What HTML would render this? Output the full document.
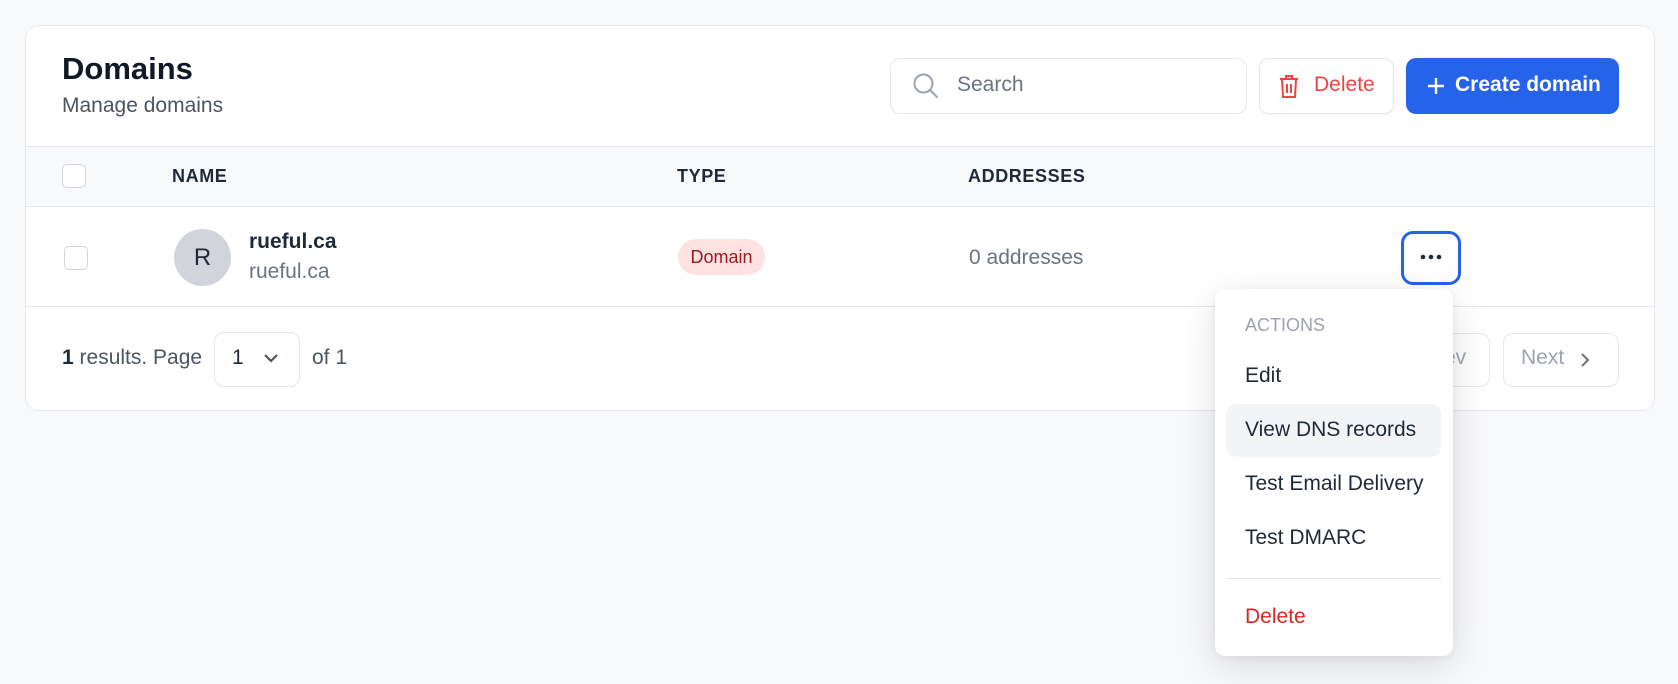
<!DOCTYPE html>
<html><head><meta charset="utf-8"><style>
*{box-sizing:border-box;margin:0;padding:0}
body{width:1678px;height:684px;background:#f8f9fb;font-family:"Liberation Sans",sans-serif;position:relative;overflow:hidden;color:#1f2937}
.abs{position:absolute}
.card{left:25px;top:25px;width:1630px;height:386px;background:#fff;border:1px solid #e5e7eb;border-radius:14px;overflow:hidden}
.t{white-space:nowrap}
.cb{width:24px;height:24px;border:1.5px solid #d1d5db;border-radius:5px;background:#fff}
.th{font-size:18px;font-weight:bold;letter-spacing:0.6px;color:#1f2937}
.mi{left:30px;font-size:21px;color:#1f2937}
</style></head><body>
<div class="abs card">
 <div class="abs t" style="left:36px;top:25px;font-size:31px;font-weight:bold;color:#111827">Domains</div>
 <div class="abs t" style="left:36px;top:68px;font-size:21px;color:#4b5563">Manage domains</div>
 <div class="abs" style="left:864px;top:32px;width:357px;height:56px;border:1px solid #e5e7eb;border-radius:10px"></div>
 <svg class="abs" style="left:886px;top:46px" width="28" height="28" viewBox="0 0 28 28" fill="none" stroke="#9ca3af" stroke-width="2"><circle cx="11.5" cy="11.5" r="9"/><path d="M18 18l7 7" stroke-linecap="round"/></svg>
 <div class="abs t" style="left:931px;top:47px;font-size:21px;color:#6b7280">Search</div>
 <div class="abs" style="left:1233px;top:32px;width:135px;height:56px;border:1px solid #e5e7eb;border-radius:10px;box-shadow:0 1px 2px rgba(0,0,0,.05)"></div>
 <svg class="abs" style="left:1251px;top:47px" width="24" height="26" viewBox="0 0 24 26" fill="none" stroke="#ef4444" stroke-width="2"><path d="M3 6h18M9 6V3h6v3M5 6l1 18h12l1-18M10 11v9M14 11v9"/></svg>
 <div class="abs t" style="left:1288px;top:47px;font-size:21px;color:#ef4444">Delete</div>
 <div class="abs" style="left:1380px;top:32px;width:213px;height:56px;background:#2563eb;border-radius:10px"></div>
 <svg class="abs" style="left:1399px;top:49px" width="22" height="22" viewBox="0 0 22 22" stroke="#fff" stroke-width="2.4"><path d="M11 3v16M3 11h16"/></svg>
 <div class="abs t" style="left:1429px;top:47px;font-size:21px;font-weight:bold;color:#fff">Create domain</div>
 <div class="abs" style="left:0;top:120px;width:100%;height:61px;background:#f8f9fb;border-top:1px solid #e5e7eb;border-bottom:1px solid #e5e7eb"></div>
 <div class="abs cb" style="left:36px;top:138px"></div>
 <div class="abs t th" style="left:146px;top:140px">NAME</div>
 <div class="abs t th" style="left:651px;top:140px">TYPE</div>
 <div class="abs t th" style="left:942px;top:140px">ADDRESSES</div>
 <div class="abs cb" style="left:38px;top:220px"></div>
 <div class="abs" style="left:148px;top:203px;width:57px;height:57px;border-radius:50%;background:#d1d5db;text-align:center;line-height:57px;font-size:24px;color:#1f2937">R</div>
 <div class="abs t" style="left:223px;top:204px;font-size:21px;font-weight:bold;color:#1f2937">rueful.ca</div>
 <div class="abs t" style="left:223px;top:234px;font-size:21px;color:#6b7280">rueful.ca</div>
 <div class="abs t" style="left:652px;top:213px;width:87px;height:36px;border-radius:18px;background:#fee2e2;color:#991b1b;font-size:18px;text-align:center;line-height:36px">Domain</div>
 <div class="abs t" style="left:943px;top:220px;font-size:21px;color:#6b7280">0 addresses</div>
 <div class="abs" style="left:1375px;top:205px;width:60px;height:54px;border:3px solid #2563eb;border-radius:12px;background:#fff"></div>
 <svg class="abs" style="left:1393px;top:227px" width="24" height="8"><circle cx="4" cy="4" r="2.3" fill="#1f2937"/><circle cx="12" cy="4" r="2.3" fill="#1f2937"/><circle cx="20" cy="4" r="2.3" fill="#1f2937"/></svg>
 <div class="abs" style="left:0;top:280px;width:100%;height:1px;background:#e5e7eb"></div>
 <div class="abs t" style="left:36px;top:320px;font-size:21px;color:#4b5563"><b style="color:#1f2937">1</b> results. Page</div>
 <div class="abs" style="left:188px;top:306px;width:86px;height:55px;border:1px solid #e5e7eb;border-radius:10px"></div>
 <div class="abs t" style="left:206px;top:320px;font-size:21px;color:#1f2937">1</div>
 <svg class="abs" style="left:236px;top:326px" width="18" height="12" fill="none" stroke="#4b5563" stroke-width="2.2"><path d="M3 3l6 6 6-6"/></svg>
 <div class="abs t" style="left:286px;top:320px;font-size:21px;color:#4b5563">of 1</div>
 <div class="abs" style="left:1360px;top:307px;width:104px;height:54px;border:1px solid #e5e7eb;border-radius:10px"></div>
 <div class="abs t" style="left:1397px;top:320px;font-size:21px;color:#9ca3af">Prev</div>
 <div class="abs" style="left:1477px;top:307px;width:116px;height:54px;border:1px solid #e5e7eb;border-radius:10px"></div>
 <div class="abs t" style="left:1495px;top:320px;font-size:21px;color:#9ca3af">Next</div>
 <svg class="abs" style="left:1553px;top:325px" width="12" height="18" fill="none" stroke="#6b7280" stroke-width="2"><path d="M3 3l6 6-6 6"/></svg>
</div>
<div class="abs" style="left:1215px;top:289px;width:238px;height:367px;background:#fff;border-radius:10px;box-shadow:0 10px 40px rgba(0,0,0,.12),0 2px 8px rgba(0,0,0,.06)">
 <div class="abs t" style="left:30px;top:26px;font-size:18px;color:#9ca3af">ACTIONS</div>
 <div class="abs t mi" style="top:75px">Edit</div>
 <div class="abs" style="left:11px;top:115px;width:215px;height:53px;background:#f3f4f6;border-radius:10px"></div>
 <div class="abs t mi" style="top:129px">View DNS records</div>
 <div class="abs t mi" style="top:183px">Test Email Delivery</div>
 <div class="abs t mi" style="top:237px">Test DMARC</div>
 <div class="abs" style="left:11px;top:289px;width:215px;height:1px;background:#e5e7eb"></div>
 <div class="abs t mi" style="top:316px;color:#dc2626">Delete</div>
</div>
</body></html>
